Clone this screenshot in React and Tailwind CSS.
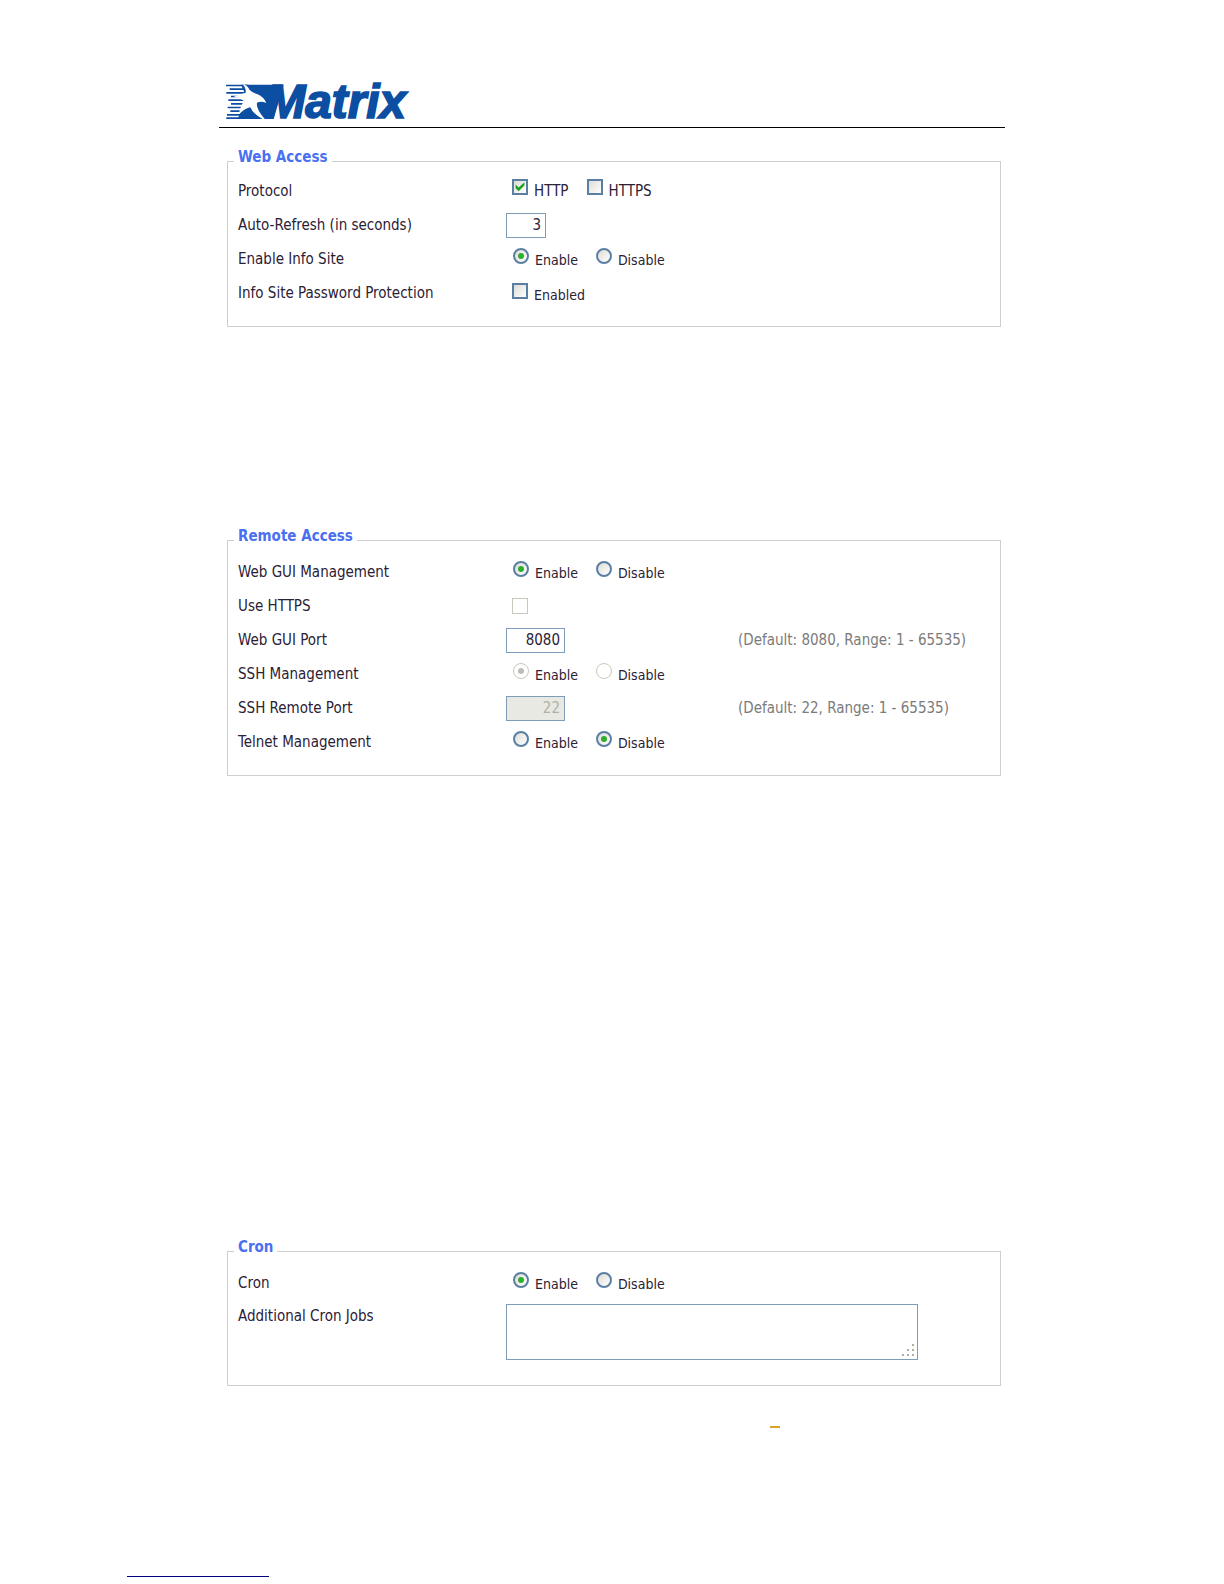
import React from "react";

const fieldBorder = "border border-[#7f9db9] bg-white";

function Tick() {
  return (
    <svg viewBox="0 0 16 16" className="pointer-events-none absolute inset-0 hidden size-4 peer-checked:block" aria-hidden="true">
      <path d="M3.6 5.6 6.6 8.6 12.4 3.2V6.6L6.6 12.2 3.6 9.2Z" fill="#21a121" />
    </svg>
  );
}

function Check({ label, size = "text-sm", ...props }) {
  return (
    <label className={"flex items-start gap-1.5 " + size}>
      <span className="relative size-4 shrink-0">
        <input
          type="checkbox"
          className="peer block size-4 appearance-none border-2 border-[#5b7fa3] bg-linear-to-br from-[#dcdcd7] to-white disabled:border disabled:border-[#cac8bb] disabled:bg-none"
          {...props}
        />
        <Tick />
      </span>
      {label && <span className="leading-6">{label}</span>}
    </label>
  );
}

function Radio({ label, ...props }) {
  return (
    <label className="flex items-start gap-1.5 text-sm">
      <span className="relative size-4 shrink-0">
        <input
          type="radio"
          className="peer block size-4 appearance-none rounded-full border-2 border-[#5b7fa3] bg-linear-to-br from-[#dcdcd7] to-white disabled:border disabled:border-[#cac8bb] disabled:bg-none"
          {...props}
        />
        <span className="pointer-events-none absolute inset-[5px] hidden rounded-full bg-[#2fae2f] peer-checked:block peer-disabled:bg-[#bdbdb5]" />
      </span>
      <span className="leading-6">{label}</span>
    </label>
  );
}

function EnableDisable({ name, value, disabled, label }) {
  return (
    <div role="radiogroup" aria-label={label} className="flex gap-[18px] pl-[7px] pt-0.5">
      <Radio name={name} label="Enable" defaultChecked={value === "enable"} disabled={disabled} />
      <Radio name={name} label="Disable" defaultChecked={value === "disable"} disabled={disabled} />
    </div>
  );
}

function Row({ label, htmlFor, hint, children }) {
  return (
    <div className="grid min-h-[34px] grid-cols-[268px_232px_1fr] items-center">
      {htmlFor ? <label htmlFor={htmlFor}>{label}</label> : <span>{label}</span>}
      {children}
      {hint && <span className="text-[#7b7b7b]">{hint}</span>}
    </div>
  );
}

function Section({ title, className, children }) {
  return (
    <fieldset className={"border border-[#cfcfcf] px-[10px] " + className}>
      <legend className="-ml-1 px-1 pb-2 font-bold leading-4 text-[#4a6ff0]">{title}</legend>
      {children}
    </fieldset>
  );
}

function Logo() {
  return (
    <svg viewBox="33 36 570 114" className="block h-[38px] w-[190px] overflow-visible" role="img" aria-label="Matrix">
      <g fill="#0b4ea2">
        <path d="M33 44H100V49H33ZM44 55H96V60H44ZM34 66H98V71H34ZM48 77H96V82H48ZM40 88H90V93H40ZM48 99H86V104H48ZM38 110H84V115H38ZM46 121H82V126H46ZM36 132H84V137H36ZM34 142H90V147H34Z" />
        <path d="M78 44H206L176 147H68L84 108 92 76Z" />
        <text
          x="152"
          y="145"
          fontFamily="Liberation Sans"
          fontWeight="700"
          fontStyle="italic"
          fontSize="143"
          stroke="#0b4ea2"
          strokeWidth="5"
        >
          Matrix
        </text>
      </g>
      <path
        d="M82 43Q96 44 104 60 112 68 126 72 146 80 154 99 138 92 126 98 122 116 150 148H144Q112 130 106 112 92 114 72 132 76 106 88 94 74 82 56 80 74 72 92 68 94 54 82 43Z"
        fill="#fff"
      />
    </svg>
  );
}

export default function App() {
  return (
    <div className="min-h-screen bg-white font-['DejaVu_Sans_Condensed','DejaVu_Sans',sans-serif] text-[15px] leading-5 text-[#2b2135]">
      <div className="mx-auto max-w-[786px] pt-[82px]">
        <header className="border-b border-black pb-[7px] pl-[7px]">
          <Logo />
        </header>

        <main className="pl-2 pr-1">
          <Section title="Web Access" className="mt-[21px] pb-4 pt-px">
            <Row label="Protocol">
              <div className="flex gap-[18px] pl-1.5">
                <Check label="HTTP" size="text-[15px]" defaultChecked />
                <Check label="HTTPS" size="text-[15px]" />
              </div>
            </Row>
            <Row label="Auto-Refresh (in seconds)" htmlFor="refresh">
              <input id="refresh" defaultValue="3" className={"h-[25px] w-10 px-1 text-right " + fieldBorder} />
            </Row>
            <Row label="Enable Info Site">
              <EnableDisable name="info" label="Enable Info Site" value="enable" />
            </Row>
            <Row label="Info Site Password Protection">
              <div className="pl-1.5 pt-[3px]">
                <Check label="Enabled" />
              </div>
            </Row>
          </Section>

          <Section title="Remote Access" className="mt-[201px] pb-4 pt-[3px]">
            <Row label="Web GUI Management">
              <EnableDisable name="gui" label="Web GUI Management" value="enable" />
            </Row>
            <Row label="Use HTTPS" htmlFor="https">
              <div className="pl-1.5">
                <Check id="https" disabled />
              </div>
            </Row>
            <Row label="Web GUI Port" htmlFor="guiport" hint="(Default: 8080, Range: 1 - 65535)">
              <input id="guiport" defaultValue="8080" className={"h-[25px] w-[59px] px-1 text-right " + fieldBorder} />
            </Row>
            <Row label="SSH Management">
              <EnableDisable name="ssh" label="SSH Management" value="enable" disabled />
            </Row>
            <Row label="SSH Remote Port" htmlFor="sshport" hint="(Default: 22, Range: 1 - 65535)">
              <input
                id="sshport"
                defaultValue="22"
                disabled
                className="h-[25px] w-[59px] border border-[#7f9db9] bg-[#e8e9e3] px-1 text-right text-[#b0b0a6]"
              />
            </Row>
            <Row label="Telnet Management">
              <EnableDisable name="telnet" label="Telnet Management" value="disable" />
            </Row>
          </Section>

          <Section title="Cron" className="mt-[463px] pb-[25px] pt-[3px]">
            <Row label="Cron">
              <EnableDisable name="cron" label="Cron" value="enable" />
            </Row>
            <div className="grid grid-cols-[268px_1fr] items-start pt-1">
              <label htmlFor="jobs" className="leading-6">Additional Cron Jobs</label>
              <div className="relative max-w-[412px]">
                <textarea id="jobs" className={"block h-[56px] w-full resize-none px-1 " + fieldBorder} />
                <svg viewBox="0 0 12 12" className="pointer-events-none absolute bottom-1 right-1 size-3" fill="#b5ad9c" aria-hidden="true">
                  <path d="M10 0h2v2h-2zM5 5h2v2H5zM10 5h2v2h-2zM0 10h2v2H0zM5 10h2v2H5zM10 10h2v2h-2z" />
                </svg>
              </div>
            </div>
          </Section>
          <div className="ml-[543px] mt-10 h-0.5 w-[10px] bg-[#d9a520]" />
        </main>
      </div>
      <div className="ml-[127px] mt-[148px] h-px w-[142px] bg-[#000080]" />
    </div>
  );
}
